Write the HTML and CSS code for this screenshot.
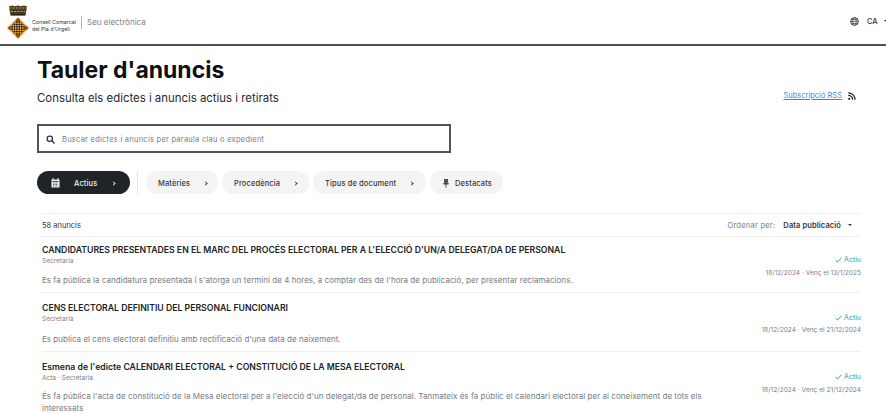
FILE: index.html
```html
<!DOCTYPE html>
<html lang="ca">
<head>
<meta charset="utf-8">
<title>Tauler d'anuncis</title>
<link rel="stylesheet" href="styles.css">
</head>
<body>
<header class="topbar">
  <div class="brand">
    <svg class="logo" width="22" height="35" viewBox="0 0 22 35">
      <defs>
        <pattern id="chk" width="3.4" height="3.4" patternUnits="userSpaceOnUse" patternTransform="rotate(45 11 23)">
          <rect width="3.4" height="3.4" fill="#e0a63c"/>
          <rect width="1.7" height="1.7" fill="#2a1f14"/>
          <rect x="1.7" y="1.7" width="1.7" height="1.7" fill="#2a1f14"/>
        </pattern>
      </defs>
      <path d="M2 1.5 5 .5l3 .8 3-.8 3 .8 3-.8 3 1-1.2 7.5H3.2z" fill="#4a3a1e"/>
      <path d="M2.5 3h17M4 6.5h14" stroke="#b9a165" stroke-width="1.2" stroke-dasharray="2 1.2"/>
      <path d="M3.5 9h15v1.6h-15z" fill="#2a2115"/>
      <path d="M11 12 22 23 11 34 0 23z" fill="#e0a63c"/>
      <path d="M11 14 20 23 11 32 2 23z" fill="url(#chk)"/>
      <path d="M11 13 13 15 11 17 9 15zM11 29 13 31 11 33 9 31zM2.5 21l2 2-2 2-1.500-2zM19.500 21l1.500 2-1.500 2-2-2z" fill="#a8321e"/>
    </svg>
    <div class="org">Consell Comarcal<br>del Pla d'Urgell</div>
    <div class="site">Seu electrònica</div>
  </div>
  <div class="lang">
    <svg width="9" height="9" viewBox="0 0 10 10"><circle cx="5" cy="5" r="4.3" fill="none" stroke="#333" stroke-width="1"/><ellipse cx="5" cy="5" rx="1.9" ry="4.3" fill="none" stroke="#333" stroke-width=".8"/><path d="M.7 5h8.6M1.4 2.800h7.200M1.400 7.200h7.200" stroke="#333" stroke-width=".7"/></svg>
    <span class="lang-code">CA</span>
    <span class="caret"></span>
  </div>
</header>

<main class="page">
  <section class="heading">
    <div>
      <h1 class="title">Tauler d'anuncis</h1>
      <p class="subtitle">Consulta els edictes i anuncis actius i retirats</p>
    </div>
    <div class="rss">
      <a class="rss-link" href="#">Subscripció RSS</a>
      <svg width="8" height="8" viewBox="0 0 8 8"><circle cx="1.2" cy="6.800" r="1.100" fill="#222"/><path d="M.3 3.300a4.400 4.400 0 0 1 4.400 4.400M.3.900a6.800 6.800 0 0 1 6.800 6.800" fill="none" stroke="#222" stroke-width="1.200"/></svg>
    </div>
  </section>

  <div class="search">
    <svg width="9" height="9" viewBox="0 0 10 10"><circle cx="4.200" cy="4.200" r="3" fill="none" stroke="#333" stroke-width="1.400"/><path d="M6.500 6.500 9.400 9.400" stroke="#333" stroke-width="1.500"/></svg>
    <span class="search-text">Buscar edictes i anuncis per paraula clau o expedient</span>
  </div>

  <nav class="filters">
    <div class="pill pill-active">
      <svg width="9" height="10" viewBox="0 0 9 10"><path d="M.5 1.500h8v8h-8z" fill="#f2f2f2"/><path d="M2 0v2M7 0v2" stroke="#f2f2f2" stroke-width="1"/><path d="M1.500 3.400h6" stroke="#1f2428" stroke-width=".8"/><path d="M2 5h5M2 6.500h5M2 8h5" stroke="#1f2428" stroke-width=".7" stroke-dasharray="1 .6"/></svg>
      <span class="pill-label">Actius</span>
      <span class="chev chev-light"></span>
    </div>
    <span class="vsep"></span>
    <div class="pill pill-m"><span>Matèries</span><span class="chev"></span></div>
    <div class="pill pill-p"><span>Procedència</span><span class="chev"></span></div>
    <div class="pill pill-t"><span>Tipus de document</span><span class="chev"></span></div>
    <div class="pill pill-d">
      <svg width="6" height="9" viewBox="0 0 6 9"><path d="M1 .5h4M1.600.5v3.200L.4 5h5.200L4.400 3.700V.5M3 5v3.600" fill="#555" stroke="#444" stroke-width=".9"/></svg>
      <span>Destacats</span>
    </div>
  </nav>

  <section class="list">
    <div class="list-head">
      <span class="count">58 anuncis</span>
      <div class="sort">
        <span class="sort-label">Ordenar per:</span>
        <span class="sort-value">Data publicació</span>
        <span class="caret"></span>
      </div>
    </div>

    <article class="item item-1">
      <div class="item-main">
        <h2 class="item-title">CANDIDATURES PRESENTADES EN EL MARC DEL PROCÉS ELECTORAL PER A L'ELECCIÓ D'UN/A DELEGAT/DA DE PERSONAL</h2>
        <div class="item-meta">Secretaria</div>
        <p class="item-desc">Es fa pública la candidatura presentada i s'atorga un termini de 4 hores, a comptar des de l'hora de publicació, per presentar reclamacions.</p>
      </div>
      <div class="item-side">
        <div class="status"><svg width="7" height="6" viewBox="0 0 7 6"><path d="M.5 3.200 2.500 5 6.500.7" fill="none" stroke="#3f9d86" stroke-width="1"/></svg>Actiu</div>
        <div class="dates">18/12/2024 · Venç el 13/1/2025</div>
      </div>
    </article>

    <article class="item item-2">
      <div class="item-main">
        <h2 class="item-title">CENS ELECTORAL DEFINITIU DEL PERSONAL FUNCIONARI</h2>
        <div class="item-meta">Secretaria</div>
        <p class="item-desc">Es publica el cens electoral definitiu amb rectificació d'una data de naixement.</p>
      </div>
      <div class="item-side">
        <div class="status"><svg width="7" height="6" viewBox="0 0 7 6"><path d="M.5 3.200 2.500 5 6.500.7" fill="none" stroke="#3f9d86" stroke-width="1"/></svg>Actiu</div>
        <div class="dates">18/12/2024 · Venç el 21/12/2024</div>
      </div>
    </article>

    <article class="item item-3">
      <div class="item-main">
        <h2 class="item-title">Esmena de l'edicte CALENDARI ELECTORAL + CONSTITUCIÓ DE LA MESA ELECTORAL</h2>
        <div class="item-meta">Acta · Secretaria</div>
        <p class="item-desc">És fa pública l'acta de constitució de la Mesa electoral per a l'elecció d'un delegat/da de personal. Tanmateix és fa públic el calendari electoral per al coneixement de tots els interessats</p>
      </div>
      <div class="item-side">
        <div class="status"><svg width="7" height="6" viewBox="0 0 7 6"><path d="M.5 3.200 2.500 5 6.500.7" fill="none" stroke="#3f9d86" stroke-width="1"/></svg>Actiu</div>
        <div class="dates">18/12/2024 · Venç el 21/12/2024</div>
      </div>
    </article>
  </section>
</main>
</body>
</html>
```

FILE: styles.css
```css
* { box-sizing: border-box; }
html, body { height: 414px; overflow: hidden; }
body { margin: 0; background: #fff; color: #1f2326; font-family: Inter, "Liberation Sans", sans-serif; }

.topbar { height: 46px; border-bottom: 2px solid #4d5156; display: flex; justify-content: space-between; align-items: center; padding: 0 0 0 7px; }
.brand { display: flex; align-items: center; }
.org { font-size: 5.3px; line-height: 7px; margin: 8px 0 0 3px; color: #333; width: 49px; }
.site { font-size: 8px; line-height: 13px; margin: 1px 0 0; padding-left: 5px; border-left: 1px solid #b5b8bb; color: #7c8187; }
.lang { display: flex; align-items: center; margin-bottom: 2px; }
.lang svg { margin-right: 8px; }
.lang-code { font-size: 7.5px; font-weight: 500; color: #333; width: 17px; }
.lang .caret { margin-right: -2px; }
.caret { display: inline-block; border-left: 2.5px solid transparent; border-right: 2.5px solid transparent; border-top: 2.5px solid #333; }

.page { padding: 0 25px 0 37px; }
.heading { display: flex; justify-content: space-between; align-items: flex-end; padding-top: 9px; }
.title { margin: 0; font-size: 23px; line-height: 30px; font-weight: 700; color: #0d0f11; }
.subtitle { margin: 5px 0 0; font-size: 11.4px; line-height: 16px; color: #25292c; }
.rss { display: flex; align-items: center; gap: 6px; margin: 0 5px 6px 0; }
.rss-link { font-size: 7.5px; color: #3f86d8; text-decoration: underline; }

.search { width: 414px; height: 29px; margin-top: 18px; border: 2px solid #555; display: flex; align-items: center; padding: 1px 0 0 7px; }
.search-text { margin-left: 7px; font-size: 7.5px; color: #777c81; letter-spacing: .25px; }

.filters { display: flex; align-items: center; margin-top: 18px; height: 23px; }
.pill { height: 23px; border-radius: 12px; background: #f4f4f4; display: flex; align-items: center; font-size: 7.5px; font-weight: 500; color: #34383c; letter-spacing: .12px; padding-top: 1px; }
.pill-active { width: 93px; background: #1f2428; color: #eee; padding-left: 14px; }
.pill-label { margin-left: 14px; }
.pill-active .chev { margin-left: 15px; }
.vsep { width: 1px; height: 23px; background: #e6e6e6; margin: 0 8px 0 7px; }
.pill-m { width: 72px; padding-left: 12px; gap: 14px; }
.pill-p { width: 87px; padding-left: 12px; margin-left: 4px; gap: 14px; }
.pill-t { width: 113px; padding-left: 12px; margin-left: 4px; gap: 14px; }
.pill-d { width: 73px; padding-left: 13px; margin-left: 4px; gap: 6px; }
.chev { display: inline-block; width: 3px; height: 3px; border-top: 1px solid #444; border-right: 1px solid #444; transform: rotate(45deg); }
.chev-light { border-color: #ddd; }

.list { margin: 19px 0 0 5px; }
.list-head { height: 24px; border-top: 1px solid #efefef; border-bottom: 1px solid #efefef; display: flex; justify-content: space-between; align-items: center; font-size: 7.5px; }
.count { color: #34383c; }
.sort { display: flex; align-items: center; margin-right: 9px; }
.sort-label { color: #777c81; letter-spacing: .25px; }
.sort-value { margin: 0 7px 0 8px; font-weight: 600; color: #34383c; letter-spacing: .1px; }

.item { display: flex; justify-content: space-between; border-bottom: 1px solid #efefef; }
.item-1 { height: 56px; }
.item-2 { height: 59px; }
.item-3 { height: 60px; border-bottom: 0; }
.item-main { flex: 1; min-width: 0; padding-top: 7px; }
.item-2 .item-main, .item-3 .item-main { padding-top: 9px; }
.item-title { margin: 0; font-size: 8.7px; line-height: 12px; font-weight: 600; color: #202427; white-space: nowrap; }
.item-meta { font-size: 6.5px; line-height: 9px; margin-top: 1px; color: #7d8186; }
.item-desc { margin: 8px 0 0; font-size: 8px; line-height: 12px; color: #777c81; letter-spacing: .03px; }
.item-2 .item-desc { margin-top: 9px; }
.item-3 .item-desc { margin-top: 7px; max-width: 680px; }
.item-side { width: 110px; flex: none; display: flex; flex-direction: column; align-items: flex-end; padding-top: 18px; }
.item-2 .item-side, .item-3 .item-side { padding-top: 20px; }
.status { display: flex; align-items: center; gap: 2px; font-size: 7px; line-height: 9px; color: #4a9c8a; }
.dates { margin-top: 5px; font-size: 6.6px; line-height: 9px; color: #7d8186; white-space: nowrap; }
.item-2 .dates { margin-top: 4px; }
```
